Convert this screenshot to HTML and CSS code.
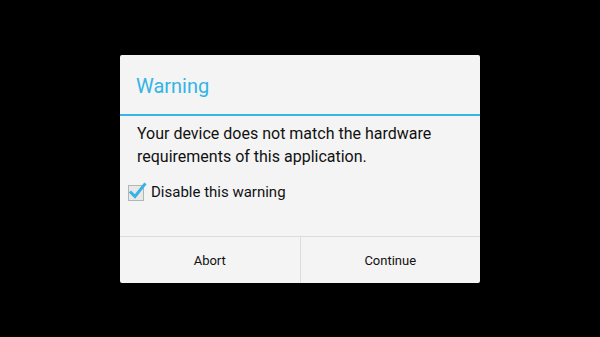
FILE: index.html
```html
<!DOCTYPE html>
<html>
<head>
<meta charset="utf-8">
<link rel="stylesheet" href="styles.css">
</head>
<body>
<div class="screen">
  <div class="dialog">
    <div class="title">Warning</div>
    <div class="divider"></div>
    <div class="content">
      <div class="message">Your device does not match the hardware requirements of this application.</div>
      <label class="check">
        <span class="box">
          <svg width="20" height="20" viewBox="0 0 20 20">
            <rect x="1.5" y="3.5" width="15" height="15" fill="#e8e8e8" stroke="#b4b4b4" stroke-width="1"/>
            <path d="M4 10.5 L8 14.5 L17.5 2.5" fill="none" stroke="#33b5e5" stroke-width="3" stroke-linecap="square"/>
          </svg>
        </span>
        <span class="label">Disable this warning</span>
      </label>
    </div>
    <div class="buttons">
      <div class="btn">Abort</div>
      <div class="btn">Continue</div>
    </div>
  </div>
</div>
</body>
</html>
```
FILE: styles.css
```css
html, body {
  margin: 0;
  padding: 0;
  background: #000;
}
.screen {
  width: 600px;
  height: 337px;
  display: flex;
  justify-content: center;
  align-items: flex-start;
  padding-top: 55px;
  box-sizing: border-box;
  font-family: Roboto, "Liberation Sans", sans-serif;
}
.dialog {
  width: 360px;
  height: 228px;
  background: #f4f4f4;
  border-radius: 2px;
  display: flex;
  flex-direction: column;
}
.title {
  height: 59px;
  padding-left: 16px;
  display: flex;
  align-items: center;
  font-size: 20px;
  color: #33b5e5;
  padding-top: 2px;
  box-sizing: border-box;
}
.divider {
  height: 2px;
  background: #33b5e5;
}
.content {
  flex: 1;
  padding: 6px 8px 0 17px;
}
.message {
  font-size: 16px;
  line-height: 23px;
  color: #111;
}
.check {
  display: flex;
  align-items: center;
  margin-left: -10px;
  margin-top: 14px;
}
.box {
  width: 20px;
  height: 20px;
  display: block;
  margin-right: 4px;
}
.box svg { display: block; }
.label {
  font-size: 15px;
  color: #111;
}
.buttons {
  height: 46px;
  border-top: 1px solid #dcdcdc;
  display: flex;
}
.btn {
  flex: 1;
  display: flex;
  align-items: center;
  justify-content: center;
  font-size: 13px;
  color: #111;
}
.btn + .btn {
  border-left: 1px solid #dcdcdc;
}
```
